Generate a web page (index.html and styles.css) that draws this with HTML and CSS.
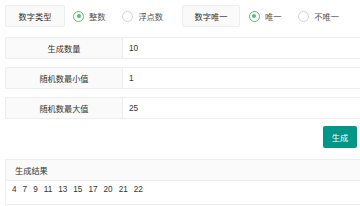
FILE: index.html
```html
<!DOCTYPE html>
<html lang="zh">
<head>
<meta charset="utf-8">
<link rel="stylesheet" href="styles.css">
</head>
<body>
<div class="page">
  <div class="opts">
    <div class="tag">数字类型</div>
    <label class="radio on"><span class="dot"></span>整数</label>
    <label class="radio"><span class="dot"></span>浮点数</label>
    <div class="tag tag2">数字唯一</div>
    <label class="radio on"><span class="dot"></span>唯一</label>
    <label class="radio"><span class="dot"></span>不唯一</label>
  </div>
  <div class="row"><div class="lbl">生成数量</div><div class="val">10</div></div>
  <div class="row"><div class="lbl">随机数最小值</div><div class="val">1</div></div>
  <div class="row"><div class="lbl">随机数最大值</div><div class="val">25</div></div>
  <div class="actions"><button class="btn">生成</button></div>
  <div class="result">
    <div class="rhead">生成结果</div>
    <div class="rbody"><span>4</span><span>7</span><span>9</span><span>11</span><span>13</span><span>15</span><span>17</span><span>20</span><span>21</span><span>22</span></div>
  </div>
</div>
</body>
</html>
```
FILE: styles.css
```css
html, body {
  margin: 0;
  padding: 0;
  background: #fff;
}
body {
  font-family: "Liberation Sans", "Noto Sans CJK SC", sans-serif;
  font-size: 8.2px;
  color: #333;
  width: 360px;
  height: 206px;
  overflow: hidden;
}
.page {
  padding: 5px 0 0 5px;
  width: 355px;
}
.opts {
  display: flex;
  align-items: center;
  height: 22px;
  white-space: nowrap;
}
.tag {
  flex: none;
  width: 60px;
  height: 22px;
  box-sizing: border-box;
  border: 1px solid #eee;
  background: #fafafa;
  border-radius: 2px;
  display: flex;
  align-items: center;
  justify-content: center;
  margin-right: 8px;
}
.tag2 {
  width: 58px;
  margin-left: 2px;
  margin-right: 9px;
}
.radio {
  flex: none;
  display: flex;
  align-items: center;
  color: #555;
  margin-right: 17px;
}
.dot {
  flex: none;
  width: 11px;
  height: 11px;
  box-sizing: border-box;
  border: 1px solid #d2d2d2;
  border-radius: 50%;
  margin-right: 5px;
  position: relative;
}
.radio.on .dot {
  border-color: #5fb878;
}
.radio.on .dot::after {
  content: "";
  position: absolute;
  left: 2.5px;
  top: 2.5px;
  width: 4px;
  height: 4px;
  border-radius: 50%;
  background: #5fb878;
}
.row {
  display: flex;
  height: 22px;
  margin-top: 8px;
  box-sizing: border-box;
  border: 1px solid #eee;
  border-right: none;
  border-radius: 2px 0 0 2px;
  width: 360px;
}
.opts + .row {
  margin-top: 10px;
}
.lbl {
  flex: none;
  width: 116px;
  background: #fafafa;
  border-right: 1px solid #eee;
  display: flex;
  align-items: center;
  justify-content: center;
}
.val {
  flex: 1;
  display: flex;
  align-items: center;
  padding-left: 6px;
}
.actions {
  display: flex;
  justify-content: flex-end;
  margin-top: 7px;
  width: 352px;
}
.btn {
  width: 34px;
  height: 22px;
  border: none;
  border-radius: 2px;
  background: #009688;
  color: #fff;
  font-family: inherit;
  font-size: 8.2px;
  padding: 0;
}
.result {
  margin-top: 11px;
  border: 1px solid #eee;
  border-right: none;
  width: 360px;
  box-sizing: border-box;
}
.rhead {
  height: 20px;
  background: #fafafa;
  border-bottom: 1px solid #eee;
  display: flex;
  align-items: center;
  padding-left: 9px;
}
.rbody {
  padding: 4px 0 10px 6px;
  display: flex;
}
.rbody span {
  margin-right: 6px;
}
```
